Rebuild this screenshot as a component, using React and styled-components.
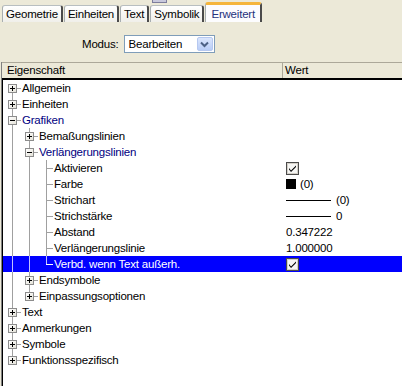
import React from "react";
import styled, { createGlobalStyle } from "styled-components";

const Global = createGlobalStyle`
  html, body { margin: 0; padding: 0; background: #ece9d8; }
  body {
    font-family: "Liberation Sans", Arial, sans-serif;
    font-size: 11px;
    letter-spacing: -0.2px;
    color: #000;
  }
`;

const Page = styled.div`
  width: 402px;
  height: 386px;
  display: flex;
  flex-direction: column;
  overflow: hidden;
  background: #ece9d8;
`;

const TopStrip = styled.div`
  height: 1px;
  display: flex;
  padding-left: 152px;
`;

const TopFragment = styled.div`
  width: 13px;
  height: 2px;
  border: 1px solid #7d7d9c;
  border-top: none;
  background: #c8c8dc;
`;

const TabBar = styled.div`
  height: 21px;
  display: flex;
  align-items: flex-end;
  padding-left: 2px;
`;

const Tab = styled.div`
  height: ${(p) => (p.$active ? 20 : 17)}px;
  box-sizing: border-box;
  padding: ${(p) => (p.$active ? "3px 5px 0 5px" : "2px 3px 0 3px")};
  margin-right: ${(p) => (p.$active ? 0 : 1)}px;
  border-left: 1px solid #a8aeb0;
  border-right: 2px solid #4a4a4a;
  border-top: ${(p) => (p.$active ? "3px solid #f5b53c" : "1px solid #b8bec0")};
  border-radius: 3px 3px 0 0;
  background: ${(p) =>
    p.$active ? "#fcfcfe" : "linear-gradient(#ffffff, #f0efea)"};
  color: ${(p) => (p.$active ? "#26337d" : "#000")};
  font-size: 11.5px;
  line-height: 13px;
  white-space: nowrap;
`;

const ModeRow = styled.div`
  display: flex;
  align-items: center;
  padding: 13px 0 9px 82px;
  gap: 5px;
  font-size: 11.5px;
`;

const Select = styled.div`
  width: 91px;
  height: 18px;
  box-sizing: border-box;
  border: 1px solid #7f9db9;
  background: #fff;
  display: flex;
  align-items: center;
  justify-content: space-between;
  padding-left: 4px;
`;

const DropButton = styled.div`
  width: 16px;
  height: 14px;
  margin-right: 1px;
  border-radius: 2px;
  background: linear-gradient(#dbe6fd, #b9cdf7);
  border: 1px solid #b6c8f0;
  box-sizing: border-box;
  display: flex;
  align-items: center;
  justify-content: center;
`;

const Panel = styled.div`
  flex: 1;
  margin-left: 1px;
  border-left: 1px solid #808080;
  box-shadow: inset 1px 0 0 #000;
  background: #fff;
  display: flex;
  flex-direction: column;
`;

const Header = styled.div`
  height: 15px;
  display: flex;
  background: #ece9d8;
  border-top: 1px solid #aca899;
  border-bottom: 2px solid #000;
  font-size: 11.5px;
`;

const HeaderCell = styled.div`
  width: ${(p) => p.$width || "auto"};
  flex: ${(p) => (p.$width ? "none" : 1)};
  box-sizing: border-box;
  padding-left: ${(p) => p.$pad}px;
  line-height: 15px;
  border-right: ${(p) => (p.$width ? "1px solid #aca899" : "none")};
`;

const Body = styled.div`
  flex: 1;
  display: flex;
  flex-direction: column;
`;

const Row = styled.div`
  height: 16px;
  display: flex;
  align-items: stretch;
  padding-left: 1px;
  margin-left: 1px;
  background: ${(p) => (p.$selected ? "#0000ff" : "transparent")};
  color: ${(p) => (p.$selected ? "#fff" : p.$open ? "#000080" : "#000")};
  font-size: 11.5px;
`;

const NameCell = styled.div`
  width: 278px;
  display: flex;
  align-items: stretch;
  overflow: hidden;
`;

const Guide = styled.div`
  position: relative;
  width: ${(p) => p.$w}px;
  flex: none;
`;

const VLine = styled.div`
  position: absolute;
  left: 8px;
  width: 1px;
  top: ${(p) => (p.$from === "mid" ? 8 : 0)}px;
  bottom: ${(p) => (p.$to === "mid" ? 8 : 0)}px;
  background: ${(p) => (p.$light ? "#c0c0ff" : "#a0a0a0")};
`;

const HLine = styled.div`
  position: absolute;
  left: 8px;
  right: 0;
  top: 8px;
  height: 1px;
  background: ${(p) => (p.$light ? "#ffffff" : "#a0a0a0")};
`;

const Box = styled.div`
  position: absolute;
  left: 4px;
  top: 4px;
  width: 9px;
  height: 9px;
  box-sizing: border-box;
  border: 1px solid #8c8c8c;
  background: linear-gradient(135deg, #ffffff, #e4e2d8);
  display: flex;
  align-items: center;
  justify-content: center;
`;

const Label = styled.div`
  line-height: 16px;
  padding-left: 1px;
  white-space: nowrap;
`;

const ValueCell = styled.div`
  flex: 1;
  display: flex;
  align-items: center;
  gap: 4px;
  padding-left: 4px;
  white-space: nowrap;
`;

const Swatch = styled.div`
  width: 10px;
  height: 10px;
  background: #000;
`;

const LineSample = styled.div`
  width: 45px;
  height: 1px;
  background: #000;
  margin-right: 1px;
`;

const tabs = ["Geometrie", "Einheiten", "Text", "Symbolik", "Erweitert"];

const rows = [
  { label: "Allgemein", box: "+", first: true, next: true, rails: [] },
  { label: "Einheiten", box: "+", next: true, rails: [] },
  { label: "Grafiken", box: "-", open: true, next: true, rails: [] },
  { label: "Bemaßungslinien", box: "+", next: true, rails: [true] },
  { label: "Verlängerungslinien", box: "-", open: true, next: true, rails: [true] },
  { label: "Aktivieren", next: true, rails: [true, true], value: { kind: "check" } },
  { label: "Farbe", next: true, rails: [true, true], value: { kind: "color", text: "(0)" } },
  { label: "Strichart", next: true, rails: [true, true], value: { kind: "line", text: "(0)" } },
  { label: "Strichstärke", next: true, rails: [true, true], value: { kind: "line", text: "0" } },
  { label: "Abstand", next: true, rails: [true, true], value: { kind: "text", text: "0.347222" } },
  { label: "Verlängerungslinie", next: true, rails: [true, true], value: { kind: "text", text: "1.000000" } },
  { label: "Verbd. wenn Text außerh.", rails: [true, true], selected: true, value: { kind: "check" } },
  { label: "Endsymbole", box: "+", next: true, rails: [true] },
  { label: "Einpassungsoptionen", box: "+", rails: [true] },
  { label: "Text", box: "+", next: true, rails: [] },
  { label: "Anmerkungen", box: "+", next: true, rails: [] },
  { label: "Symbole", box: "+", next: true, rails: [] },
  { label: "Funktionsspezifisch", box: "+", rails: [] },
];

const Chevron = () => (
  <svg width="9" height="7" viewBox="0 0 9 7">
    <path d="M1 1.5 L4.5 5 L8 1.5" fill="none" stroke="#4d6185" strokeWidth="2" />
  </svg>
);

const ExpandGlyph = ({ open }) => (
  <svg width="7" height="7" viewBox="0 0 7 7">
    <rect x="1" y="3" width="5" height="1" fill="#000" />
    {!open && <rect x="3" y="1" width="1" height="5" fill="#000" />}
  </svg>
);

const CheckBox = () => (
  <svg width="13" height="13" viewBox="0 0 13 13">
    <rect x="0.5" y="0.5" width="12" height="12" fill="#ecebe6" stroke="#4a4a4a" />
    <rect x="1.5" y="1.5" width="10" height="10" fill="#f6f6f4" stroke="#d4d0c8" />
    <path d="M3 6 L5 8.5 L10 3.5 L10 5 L5 10 L3 7.5 Z" fill="#000" />
  </svg>
);

const Value = ({ value }) => {
  if (!value) return null;
  if (value.kind === "check") return <CheckBox />;
  if (value.kind === "color")
    return (
      <>
        <Swatch />
        <span>{value.text}</span>
      </>
    );
  if (value.kind === "line")
    return (
      <>
        <LineSample />
        <span>{value.text}</span>
      </>
    );
  return <span>{value.text}</span>;
};

const TreeRow = ({ row }) => {
  const light = row.selected;
  return (
    <Row $selected={row.selected} $open={row.open}>
      <NameCell>
        {row.rails.map((on, i) => (
          <Guide key={i} $w={17}>
            {on && <VLine $light={light} />}
          </Guide>
        ))}
        <Guide $w={row.box ? 17 : 15}>
          {!row.first && <VLine $to="mid" $light={light} />}
          {row.next && <VLine $from="mid" $light={light} />}
          <HLine $light={light} />
          {row.box && (
            <Box>
              <ExpandGlyph open={row.box === "-"} />
            </Box>
          )}
        </Guide>
        <Label>{row.label}</Label>
      </NameCell>
      <ValueCell>
        <Value value={row.value} />
      </ValueCell>
    </Row>
  );
};

export default function App() {
  return (
    <Page>
      <Global />
      <TopStrip>
        <TopFragment />
      </TopStrip>
      <TabBar>
        {tabs.map((t) => (
          <Tab key={t} $active={t === "Erweitert"}>
            {t}
          </Tab>
        ))}
      </TabBar>
      <ModeRow>
        <span>Modus:</span>
        <Select>
          <span>Bearbeiten</span>
          <DropButton>
            <Chevron />
          </DropButton>
        </Select>
      </ModeRow>
      <Panel>
        <Header>
          <HeaderCell $width="281px" $pad={5}>
            Eigenschaft
          </HeaderCell>
          <HeaderCell $pad={2}>Wert</HeaderCell>
        </Header>
        <Body>
          {rows.map((r) => (
            <TreeRow key={r.label} row={r} />
          ))}
        </Body>
      </Panel>
    </Page>
  );
}
